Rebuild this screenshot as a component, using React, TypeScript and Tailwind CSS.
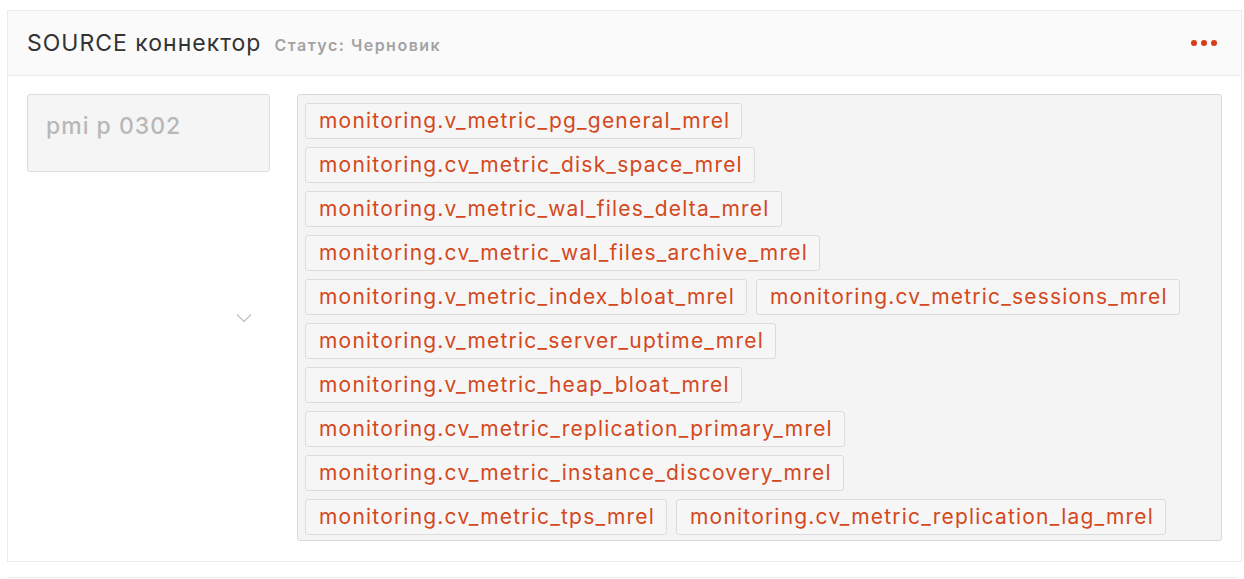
import React from "react";

const rows: string[][] = [
  ["monitoring.v_metric_pg_general_mrel"],
  ["monitoring.cv_metric_disk_space_mrel"],
  ["monitoring.v_metric_wal_files_delta_mrel"],
  ["monitoring.cv_metric_wal_files_archive_mrel"],
  ["monitoring.v_metric_index_bloat_mrel", "monitoring.cv_metric_sessions_mrel"],
  ["monitoring.v_metric_server_uptime_mrel"],
  ["monitoring.v_metric_heap_bloat_mrel"],
  ["monitoring.cv_metric_replication_primary_mrel"],
  ["monitoring.cv_metric_instance_discovery_mrel"],
  ["monitoring.cv_metric_tps_mrel", "monitoring.cv_metric_replication_lag_mrel"],
];

const Tag: React.FC<{ label: string }> = ({ label }) => (
  <span className="flex h-[36px] items-center rounded-[3px] border border-[#dcdcdc] bg-[#f6f6f6] pl-[13px] pr-[11px] text-[21px] tracking-[1.2px] text-[#d4481c] whitespace-nowrap">
    {label}
  </span>
);

export default function App() {
  return (
    <div className="min-h-[579px] bg-white pt-[10px] font-['Inter',sans-serif]">
      <div className="mx-[7px] mr-[2px] border border-[#ececec]">
        {/* Header */}
        <div className="flex h-[65px] items-center justify-between border-b border-[#ececec] bg-[#fafafa] pl-[19px] pr-[24px]">
          <div className="flex items-baseline gap-[13px]">
            <span className="text-[23px] tracking-[1px] text-[#333]">SOURCE коннектор</span>
            <span className="text-[16px] font-semibold tracking-[1.5px] text-[#a3a3a3]">Статус: Черновик</span>
          </div>
          <button className="flex items-center gap-[4px]">
            <span className="h-[6px] w-[6px] rounded-full bg-[#d93a17]" />
            <span className="h-[6px] w-[6px] rounded-full bg-[#d93a17]" />
            <span className="h-[6px] w-[6px] rounded-full bg-[#d93a17]" />
          </button>
        </div>

        {/* Body */}
        <div className="flex gap-[27px] px-[19px] pt-[18px] pb-[20px]">
          <div className="relative w-[243px] shrink-0">
            <div className="h-[78px] rounded-[3px] border border-[#dcdcdc] bg-[#f5f5f5] px-[18px] pt-[14px] text-[23px] font-medium tracking-[1px] text-[#b8b8b8]">
              pmi p 0302
            </div>
            <svg
              className="absolute right-[18px] top-1/2 -translate-y-1/2"
              width="16"
              height="9"
              viewBox="0 0 16 9"
              fill="none"
            >
              <path d="M1 1l7 7 7-7" stroke="#c4c4c4" strokeWidth="1.4" />
            </svg>
          </div>

          <div className="flex flex-1 flex-col gap-[8px] rounded-[3px] border border-[#d8d8d8] bg-[#f4f4f4] px-[7px] pt-[8px] pb-[5px]">
            {rows.map((row, i) => (
              <div key={i} className="flex gap-[9px]">
                {row.map((t) => (
                  <Tag key={t} label={t} />
                ))}
              </div>
            ))}
          </div>
        </div>
      </div>
      <div className="mx-[7px] mt-[15px] h-[2px] border-t border-[#ececec]" />
    </div>
  );
}
